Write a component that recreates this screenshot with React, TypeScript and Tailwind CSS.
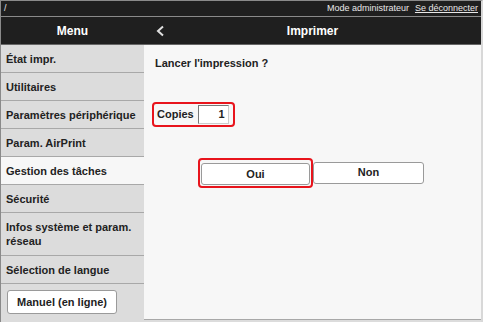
import React from "react";

const MENU = [
  "État impr.",
  "Utilitaires",
  "Paramètres périphérique",
  "Param. AirPrint",
  "Gestion des tâches",
  "Sécurité",
  "Infos système et param. réseau",
  "Sélection de langue",
];

export default function App() {
  return (
    <div
      className="w-[483px] h-[322px] overflow-hidden bg-[#dcdcdc] border-l border-t border-r-2 border-[#8a8a8a] border-r-[#d8d8d8] text-[#222]"
      style={{ fontFamily: '"Liberation Sans", Arial, sans-serif' }}
    >
      {/* Top strip */}
      <div className="h-[16px] bg-[#1f1f1f] border-b border-[#8a8a8a] flex items-center justify-between px-[3px] text-[9px] text-[#e8e8e8]">
        <span>/</span>
        <div className="flex gap-[6px]">
          <span>Mode administrateur</span>
          <span className="underline">Se déconnecter</span>
        </div>
      </div>

      {/* Header */}
      <div className="h-[28px] bg-[#1f1f1f] border-b border-[#666] flex items-center text-white font-bold text-[12px]">
        <div className="w-[143px] text-center">Menu</div>
        <div className="flex-1 relative flex items-center justify-center">
          <svg
            className="absolute left-[12px]"
            width="9"
            height="12"
            viewBox="0 0 9 12"
          >
            <path d="M7 1.5 L2 6 L7 10.5" stroke="#e0e0e0" strokeWidth="2" fill="none" />
          </svg>
          <span>Imprimer</span>
        </div>
      </div>

      <div className="flex h-[276px]">
        {/* Sidebar */}
        <div className="w-[143px] bg-[#dcdcdc] flex flex-col text-[11px] font-bold">
          {MENU.map((m) => {
            const active = m === "Gestion des tâches";
            const tall = m.startsWith("Infos");
            return (
              <div
                key={m}
                className={`px-[5px] border-b border-[#a8a8a8] flex items-center leading-[14px] ${
                  tall ? "h-[43px]" : "h-[28px]"
                } ${active ? "bg-[#f7f7f7]" : ""}`}
              >
                {m}
              </div>
            );
          })}
          <div className="pt-[6px] pl-[6px]">
            <button className="w-[110px] h-[24px] bg-white border border-[#9a9a9a] rounded-[3px] text-[11px] font-bold">
              Manuel (en ligne)
            </button>
          </div>
        </div>

        {/* Main */}
        <div className="flex-1 bg-[#f7f7f7] border-b border-[#a8a8a8] h-[275px] pl-[11px] pt-[10px]">
          <p className="text-[11px] font-bold">Lancer l'impression ?</p>
          <div className="mt-[30px] -ml-[3px] inline-flex items-center gap-[4px] border-2 border-[#e8141c] rounded-[4px] pl-[3px] pr-[4px] h-[25px]">
            <span className="text-[11px] font-bold">Copies</span>
            <div className="w-[31px] h-[19px] bg-white border border-[#777] border-r-[#ccc] border-b-[#ccc] text-right pr-[3px] text-[11px] font-bold leading-[17px]">
              1
            </div>
          </div>
          <div className="mt-[31px] flex items-center pl-[43px]">
            <div className="border-2 border-[#e8141c] rounded-[4px] p-[1px]">
              <button className="w-[109px] h-[22px] bg-white border border-[#9a9a9a] rounded-[3px] text-[11px] font-bold">
                Oui
              </button>
            </div>
            <button className="w-[111px] h-[22px] bg-white border border-[#9a9a9a] rounded-[3px] text-[11px] font-bold">
              Non
            </button>
          </div>
        </div>
      </div>
    </div>
  );
}
